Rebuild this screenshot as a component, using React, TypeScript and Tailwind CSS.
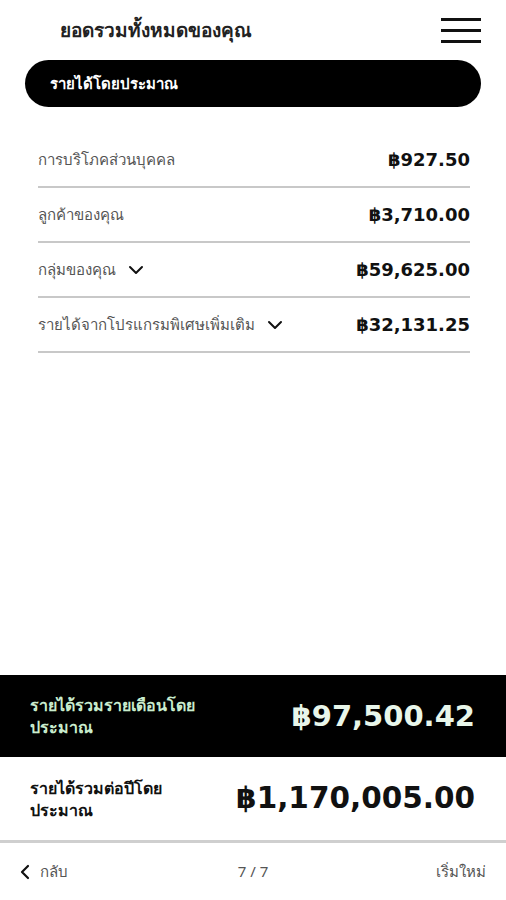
import React from "react";

const rows = [
  { label: "การบริโภคส่วนบุคคล", value: "฿927.50", chevron: false },
  { label: "ลูกค้าของคุณ", value: "฿3,710.00", chevron: false },
  { label: "กลุ่มของคุณ", value: "฿59,625.00", chevron: true },
  { label: "รายได้จากโปรแกรมพิเศษเพิ่มเติม", value: "฿32,131.25", chevron: true },
];

const num = { fontFamily: '"DejaVu Sans", "Noto Sans", sans-serif' };

function Chevron() {
  return (
    <svg width="16" height="10" viewBox="0 0 16 10" className="ml-3">
      <path d="M2 2 L8 8 L14 2" fill="none" stroke="#111" strokeWidth="2" strokeLinecap="round" strokeLinejoin="round" />
    </svg>
  );
}

export default function App() {
  return (
    <div
      className="w-[506px] h-[900px] bg-white flex flex-col overflow-hidden"
      style={{ fontFamily: '"Noto Sans", "Open Sans", sans-serif' }}
    >
      <header className="h-[60px] flex items-center justify-between pl-[60px] pr-[25px]">
        <h1 className="text-[19px] font-semibold text-[#222] leading-none">ยอดรวมทั้งหมดของคุณ</h1>
        <div className="flex flex-col gap-[8px] w-[40px]">
          <span className="block h-[3px] bg-[#111]" />
          <span className="block h-[3px] bg-[#111]" />
          <span className="block h-[3px] bg-[#111]" />
        </div>
      </header>
      <div className="mx-[25px] h-[47px] rounded-full bg-black flex items-center px-[25px]">
        <span className="text-white text-[15px] font-bold">รายได้โดยประมาณ</span>
      </div>
      <div className="ml-[38px] mt-[26px] mr-[36px] flex flex-col">
        {rows.map((r) => (
          <div key={r.label} className="h-[55px] flex items-center justify-between border-b-2 border-[#c8c8c8]">
            <div className="flex items-center text-[15px] text-[#555]">
              <span>{r.label}</span>
              {r.chevron && <Chevron />}
            </div>
            <span className="text-[18px] font-bold text-[#111]" style={num}>{r.value}</span>
          </div>
        ))}
      </div>
      <div className="flex-1" />
      <div className="h-[82px] bg-black flex items-center justify-between pl-[30px] pr-[31px]">
        <span className="text-[16px] font-bold text-[#c9eccd] leading-[22px] w-[200px]">รายได้รวมรายเดือนโดยประมาณ</span>
        <span className="text-[29px] font-bold text-[#e8f6ea] leading-none" style={num}>฿97,500.42</span>
      </div>
      <div className="h-[86px] bg-white flex items-center justify-between pl-[30px] pr-[31px] border-b-[3px] border-[#cfcfcf]">
        <span className="text-[16px] font-bold text-[#111] leading-[22px] w-[160px]">รายได้รวมต่อปีโดยประมาณ</span>
        <span className="text-[29.5px] font-bold text-[#111] leading-none" style={num}>฿1,170,005.00</span>
      </div>
      <footer className="h-[57px] flex items-center justify-between pl-[20px] pr-[20px] text-[15px] text-[#555]">
        <div className="flex items-center gap-[10px] w-[120px]">
          <svg width="10" height="16" viewBox="0 0 10 16">
            <path d="M8 2 L2 8 L8 14" fill="none" stroke="#111" strokeWidth="2.2" strokeLinecap="round" strokeLinejoin="round" />
          </svg>
          <span>กลับ</span>
        </div>
        <span>7 / 7</span>
        <div className="w-[120px] text-right">เริ่มใหม่</div>
      </footer>
    </div>
  );
}
